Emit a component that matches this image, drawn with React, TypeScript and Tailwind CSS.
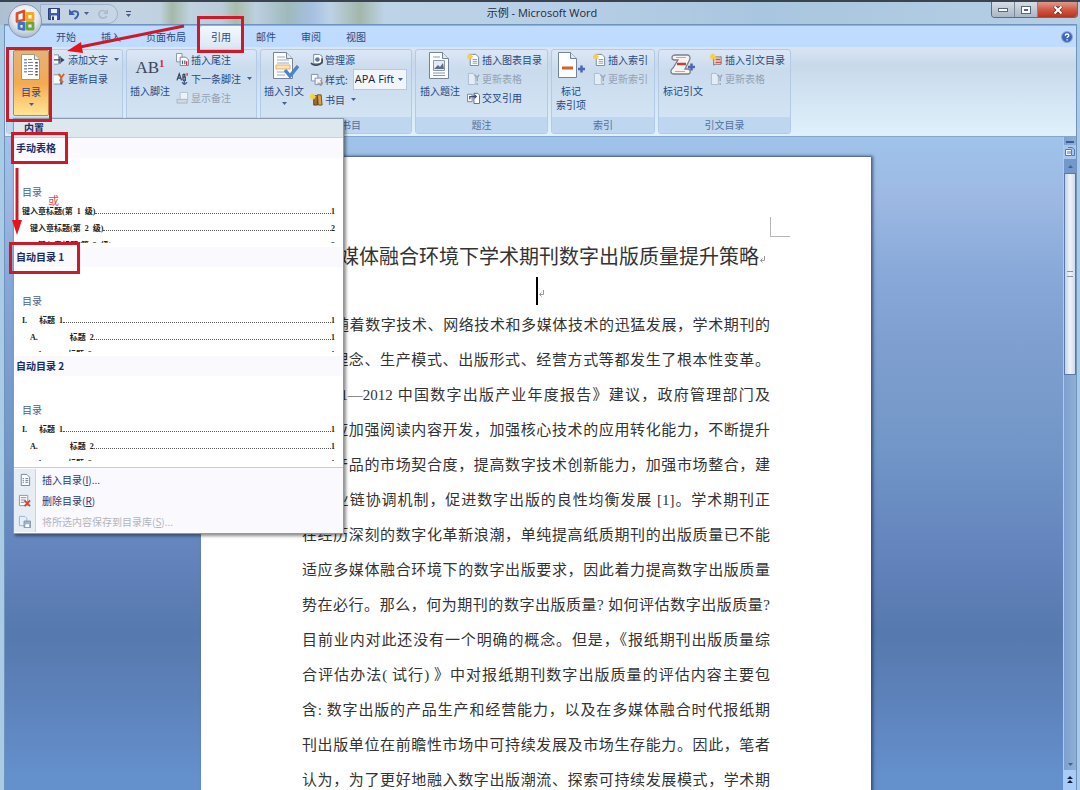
import { ReactNode } from "react";

const docLines = [
  "办刊理念、生产模式、出版形式、经营方式等都发生了根本性变革。",
  "《2011—2012 中国数字出版产业年度报告》建议，政府管理部门及",
  "企业应加强阅读内容开发，加强核心技术的应用转化能力，不断提升",
  "数字产品的市场契合度，提高数字技术创新能力，加强市场整合，建",
  "立产业链协调机制，促进数字出版的良性均衡发展 [1]。学术期刊正",
  "在经历深刻的数字化革新浪潮，单纯提高纸质期刊的出版质量已不能",
  "适应多媒体融合环境下的数字出版要求，因此着力提高数字出版质量",
  "势在必行。那么，何为期刊的数字出版质量? 如何评估数字出版质量?",
  "目前业内对此还没有一个明确的概念。但是，《报纸期刊出版质量综",
  "合评估办法( 试行) 》中对报纸期刊数字出版质量的评估内容主要包",
  "含: 数字出版的产品生产和经营能力，以及在多媒体融合时代报纸期",
  "刊出版单位在前瞻性市场中可持续发展及市场生存能力。因此，笔者",
  "认为，为了更好地融入数字出版潮流、探索可持续发展模式，学术期",
];

const tabs = ["开始", "插入", "页面布局", "引用", "邮件", "审阅", "视图"];

const Caret = ({ className = "" }: { className?: string }) => (
  <svg viewBox="0 0 5 3" className={`h-[3px] w-[5px] shrink-0 ${className}`}>
    <path d="M0 0h5L2.5 3z" fill="#46618f" />
  </svg>
);

const ParaMark = () => (
  <svg viewBox="0 0 6 7" className="inline-block h-[7px] w-[6px]">
    <path d="M5.500 0v4.500H1.500M3.500 2.500l-2 2 2 2" fill="none" stroke="#9a9a9a" />
  </svg>
);

/* ---------- small icons ---------- */

type IconKind =
  | "add"
  | "update"
  | "updateOff"
  | "endnote"
  | "nextNote"
  | "showNote"
  | "sources"
  | "style"
  | "biblio"
  | "newDoc"
  | "cross"
  | "authority"
  | "page"
  | "remove"
  | "save";

const Sheet = ({ off = false }: { off?: boolean }) => (
  <path
    d="M3.5 1.5h6l3 3v9h-9z"
    fill={off ? "#e3eaf2" : "#fbfdff"}
    stroke={off ? "#a9b8c9" : "#74839b"}
  />
);

const Star = () => (
  <path d="M3 0l1 2 2-1-1 2 2 1-2 1 1 2-2-1-1 2-1-2-2 1 1-2-2-1 2-1-1-2 2 1z" fill="#f3cf4e" />
);

const iconArt: Record<IconKind, ReactNode> = {
  add: (
    <>
      <path d="M1 2h5v10H1" fill="#f5f8fc" stroke="#8190a8" />
      <path d="M1 7.500h7M7.500 3.500v8" stroke="#3a4558" strokeWidth="1.400" />
      <path d="M8.500 4.500l4 3-4 3z" fill="#3a4558" />
    </>
  ),
  update: (
    <>
      <path d="M1 3h7v10H1" fill="#f5f8fc" stroke="#8190a8" />
      <path d="M6 2l3 4 3-4M9 6v3M7 8l4 3" fill="none" stroke="#d9622c" strokeWidth="2" />
      <path d="M9 11v2.5" stroke="#4a566b" strokeWidth="2" />
    </>
  ),
  updateOff: (
    <>
      <path d="M1.500 1.500h5l2.500 2.500v9.500h-7.500z" fill="#e4ecf5" stroke="#aabacd" />
      <path d="M8 3l3 3 2-3M11 6v4M11 12v2" fill="none" stroke="#9aa9bb" strokeWidth="1.600" />
    </>
  ),
  endnote: (
    <>
      <path d="M.5 .5h6v9h-6z" fill="#f8fafd" stroke="#8190a8" />
      <path d="M4.500 4.500h6l3 3v6h-9z" fill="#fff" stroke="#74839b" />
      <path d="M7 12V8M9.500 12V8" stroke="#4b5a77" strokeWidth="1.300" />
      <path d="M11.500 9v4" stroke="#cf3a34" strokeWidth="1.500" />
    </>
  ),
  nextNote: (
    <>
      <path d="M1 9l2.500-7L6 9M2 6.500h3M7.500 2.500V9M7.500 2.500h2v3h-2 2.500v3.500H7.500" fill="none" stroke="#333f55" strokeWidth="1.300" />
      <path d="M12 1v3" stroke="#cf3a34" strokeWidth="1.400" />
      <path d="M9 8v5M6.500 11L9 13.500l3-2.500" fill="none" stroke="#47618f" strokeWidth="1.500" />
    </>
  ),
  showNote: (
    <>
      <path d="M4.500 1.500h8v8h-8z" fill="#eef2f7" stroke="#b3c0cf" />
      <path d="M1 9h11v4H1z" fill="#cfd8e3" stroke="#a7b4c4" />
    </>
  ),
  sources: (
    <>
      <path d="M4 1.500h6l3 2v8h-9z" fill="#fff" stroke="#74839b" />
      <path d="M1 11c3 3 9 3 12-1V6" fill="none" stroke="#3e4b63" strokeWidth="1.800" />
      <circle cx="8" cy="7" r="2.500" fill="#5e79a8" />
    </>
  ),
  style: (
    <>
      <path d="M1.500 1.500h7v7h-7z" fill="#f8fafd" stroke="#8190a8" />
      <path d="M5.500 5.500h7v7h-7z" fill="#eef2f9" stroke="#8190a8" />
      <path d="M8 11h5M11 8l3 3-3 3" fill="none" stroke="#b98a8a" strokeWidth="1.200" />
    </>
  ),
  biblio: (
    <>
      <path d="M4 3h4v10H4z" fill="#9a6b35" stroke="#5d4225" />
      <path d="M8 2h4l1 11H9z" fill="#e0a33c" stroke="#6a4b22" />
      <Star />
    </>
  ),
  newDoc: (
    <>
      <Sheet />
      <path d="M6 7h5M6 9h5M6 11h5" stroke="#8b9ab3" />
      <Star />
    </>
  ),
  cross: (
    <>
      <path d="M.5 3.500h5v8h-5z" fill="#f8fafd" stroke="#74839b" />
      <path d="M7.500 2.500h4l2 2v9h-6z" fill="#fff" stroke="#59687f" />
      <path d="M3 9V6h6M8 4l2 2-2 2" fill="none" stroke="#3f4e68" strokeWidth="1.300" />
    </>
  ),
  authority: (
    <>
      <path d="M4 5c3-2 5 0 8-1v8c-3 1-5-1-8 1z" fill="#f0d7cb" stroke="#7d6c77" />
      <path d="M6 7h5M6 10h6" stroke="#c0583f" strokeWidth="1.400" />
      <Star />
    </>
  ),
  page: (
    <>
      <Sheet />
      <path d="M5 6h1.500M5 8h1.500M5 10h1.500M8 6h3M8 8h3M8 10h3" stroke="#6b7990" />
    </>
  ),
  remove: (
    <>
      <path d="M1.500 1.500h9v11h-9z" fill="#fbfdff" stroke="#8a93a5" />
      <path d="M3 4h6M3 6.500h5M3 9h4" stroke="#7d8798" />
      <path d="M7 7l6 6M13 7l-6 6" stroke="#d5493b" strokeWidth="2" />
    </>
  ),
  save: (
    <>
      <path d="M1.500 1.500h6l2 2v8h-8z" fill="#e6eff7" stroke="#9db1c9" />
      <path d="M6.500 6.500h7v7h-7z" fill="#9fb4cd" stroke="#7f95b2" />
      <path d="M8 10h4v3H8z" fill="#fff" />
    </>
  ),
};

const SmallIcon = ({ kind }: { kind: IconKind }) => (
  <svg viewBox="0 0 14 14" className="h-[13px] w-[13px] shrink-0">
    {iconArt[kind]}
  </svg>
);

/* ---------- large icons ---------- */

const LargeSheet = () => (
  <>
    <path d="M4.500 2.500h13l6 6v20h-19z" fill="#fdfeff" stroke="#76849b" />
    <path d="M17.500 2.500v6h6" fill="#dfe7f1" stroke="#76849b" />
  </>
);

const TocIcon = () => (
  <svg viewBox="0 0 30 30" className="h-[30px] w-[30px]">
    <path d="M5.500 3.500h13l5 5v20h-18z" fill="#fff" stroke="#a89878" />
    <path d="M18.500 3.500v5h5" fill="#e9edf3" stroke="#8a8f99" />
    <path d="M9.500 8v15" stroke="#8b96a8" strokeWidth="3" strokeDasharray="1.500 1.500" />
    <path d="M12 8.500h4M12 11.500h5M12 14.500h5M12 17.500h5M12 20.500h5M12 23.500h5" stroke="#7c8694" />
    <path d="M20.500 11v14" stroke="#4b5462" strokeWidth="2.500" strokeDasharray="1.500 1.500" />
  </svg>
);

const CitationIcon = () => (
  <svg viewBox="0 0 30 30" className="h-[30px] w-[30px]">
    <LargeSheet />
    <path d="M8 7h8M8 10h12M8 13h12M8 22h10M8 25h8" stroke="#9aa9bf" />
    <path d="M7 15h14v4H7z" fill="#fbe3bd" stroke="#e8b168" />
    <path d="M16 20l5 6 8-10" fill="none" stroke="#4c84cc" strokeWidth="3.500" />
  </svg>
);

const CaptionIcon = () => (
  <svg viewBox="0 0 30 30" className="h-[30px] w-[30px]">
    <LargeSheet />
    <path d="M8 7h7M8 23h12M8 25.500h12" stroke="#8a99b0" />
    <path d="M8.500 10.500h11v10h-11z" fill="#e4ebf4" stroke="#8a99b0" />
    <path d="M9 19l4-4 2 2 3-4 1 6z" fill="#5d6e88" />
  </svg>
);

const EntryIcon = () => (
  <svg viewBox="0 0 30 30" className="h-[30px] w-[30px]">
    <path d="M2.500 2.500h12l6 6v19h-18z" fill="#fdfeff" stroke="#76849b" />
    <path d="M14.500 2.500v6h6" fill="#dfe7f1" stroke="#76849b" />
    <path d="M6 18h11" stroke="#d4612c" strokeWidth="3" />
    <path d="M22 19h7M25.500 15.500v7" stroke="#4a67b0" strokeWidth="2.500" />
  </svg>
);

const MarkIcon = () => (
  <svg viewBox="0 0 30 30" className="h-[30px] w-[30px]">
    <path
      d="M4 8c0-3 2-3 4-3h11c3 0 4 3 2 6l-4 8h3c3 0 3 5 0 5H6c-4 0-4-4-1-6l5-8H7c-2 0-3-1-3-2z"
      fill="#f6f3f3"
      stroke="#7f7f8b"
      strokeWidth="1.300"
    />
    <path d="M8 7.500h10M7 21.500h10" stroke="#a9adb8" />
    <path d="M9 14h9" stroke="#cf3d31" strokeWidth="2.500" />
    <path d="M20 17h7M23.500 13.500v7" stroke="#4a67b0" strokeWidth="2.500" />
  </svg>
);

const FootnoteIcon = () => (
  <span className="flex h-[30px] items-start pt-2 font-['Liberation_Serif',serif] text-[17px] leading-5 text-[#3c4658]">
    AB<span className="text-[11px] leading-[10px] font-bold text-[#cb3434]">1</span>
  </span>
);

const OfficeLogo = () => (
  <svg viewBox="0 0 36 36" className="absolute top-[3px] left-[7px] z-10 h-9 w-9">
    <defs>
      <radialGradient id="orb" cx="50%" cy="35%" r="65%">
        <stop offset="0" stopColor="#ffffff" />
        <stop offset=".6" stopColor="#e3e9f0" />
        <stop offset="1" stopColor="#a9b7c9" />
      </radialGradient>
    </defs>
    <circle cx="18" cy="18" r="16.500" fill="url(#orb)" stroke="#8499b5" />
    <g fill="none" strokeWidth="2.800" strokeLinejoin="round">
      <path d="M10 10.500l7-2.500v9l-7 1.500z" stroke="#d8532a" />
      <path d="M20 10.500h6v6.500h-6z" stroke="#f0a928" />
      <path d="M12 20.500h5v6l-5-1z" stroke="#3c74c2" />
      <path d="M20 20h6v6h-6z" stroke="#6ca53c" />
    </g>
  </svg>
);

/* ---------- ribbon pieces ---------- */

const Group = ({
  label,
  className,
  children,
}: {
  label: string;
  className: string;
  children: ReactNode;
}) => (
  <section
    className={`flex shrink-0 flex-col overflow-hidden rounded-[3px] border border-[#b3cae6] bg-gradient-to-b from-[#dce7f5] via-[#c9dbed] via-25% to-[#d6e6f6] ${className}`}
  >
    <div className="flex flex-1 items-start">{children}</div>
    <h2 className="h-4 bg-[#bed6f0] text-center leading-4 text-[#54709d]">{label}</h2>
  </section>
);

const Big = ({
  icon,
  lines,
  caret = false,
  className,
}: {
  icon: ReactNode;
  lines: string[];
  caret?: boolean;
  className: string;
}) => (
  <button className={`flex flex-col items-center ${className}`}>
    {icon}
    <span className="pt-1 leading-[14px] whitespace-nowrap">
      {lines.map((l) => (
        <span key={l} className="block">
          {l}
        </span>
      ))}
    </span>
    {caret && <Caret className="mt-1" />}
  </button>
);

const Small = ({
  icon,
  text,
  caret = false,
  disabled = false,
}: {
  icon: IconKind;
  text: string;
  caret?: boolean;
  disabled?: boolean;
}) => (
  <button
    disabled={disabled}
    className="flex h-[19px] items-center gap-[2px] whitespace-nowrap disabled:text-[#94a2b4]"
  >
    <SmallIcon kind={icon} />
    {text}
    {caret && <Caret className="ml-1" />}
  </button>
);

const Ribbon = () => (
  <div className="flex h-[90px] gap-[3px] border-b border-[#86a5cc] bg-gradient-to-b from-[#dbe5f2] via-[#c8d9ea] via-20% to-[#e0f1fd] px-px pt-[2px] pb-[2px] text-[10px] text-[#284881]">
    <Group label="目录" className="w-[117px]">
      <Big
        icon={<TocIcon />}
        lines={["目录"]}
        caret
        className="ml-1.5 h-[66px] w-9 rounded-[2px] border border-[#b88a4a] bg-gradient-to-b from-[#e3b27b] via-[#f4a94d] via-50% to-[#ffe596]"
      />
      <div className="ml-1">
        <Small icon="add" text="添加文字" caret />
        <Small icon="update" text="更新目录" />
      </div>
    </Group>
    <Group label="脚注" className="w-[131px]">
      <Big icon={<FootnoteIcon />} lines={["插入脚注"]} className="w-[46px]" />
      <div className="ml-[3px]">
        <Small icon="endnote" text="插入尾注" />
        <Small icon="nextNote" text="下一条脚注" caret />
        <Small icon="showNote" text="显示备注" disabled />
      </div>
    </Group>
    <Group label="引文与书目" className="w-[152px]">
      <Big icon={<CitationIcon />} lines={["插入引文"]} caret className="w-[46px]" />
      <div className="ml-[3px]">
        <Small icon="sources" text="管理源" />
        <div className="flex h-[21px] items-center gap-[2px]">
          <SmallIcon kind="style" />
          <label htmlFor="cite-style" className="whitespace-nowrap">
            样式:
          </label>
          <span className="relative ml-[3px] flex items-center">
            <select
              id="cite-style"
              className="h-[21px] w-[54px] appearance-none border border-[#b4c8e0] bg-[#f1f6fc] pr-3 pl-px font-['Open_Sans',sans-serif] text-[11px] text-[#1d2433]"
            >
              <option>APA Fifth</option>
            </select>
            <Caret className="pointer-events-none absolute right-1" />
          </span>
        </div>
        <Small icon="biblio" text="书目" caret />
      </div>
    </Group>
    <Group label="题注" className="w-[133px]">
      <Big icon={<CaptionIcon />} lines={["插入题注"]} className="w-12" />
      <div className="ml-[3px]">
        <Small icon="newDoc" text="插入图表目录" />
        <Small icon="updateOff" text="更新表格" disabled />
        <Small icon="cross" text="交叉引用" />
      </div>
    </Group>
    <Group label="索引" className="w-[104px]">
      <Big icon={<EntryIcon />} lines={["标记", "索引项"]} className="w-[38px]" />
      <div className="ml-[3px]">
        <Small icon="newDoc" text="插入索引" />
        <Small icon="updateOff" text="更新索引" disabled />
      </div>
    </Group>
    <Group label="引文目录" className="w-[133px]">
      <Big icon={<MarkIcon />} lines={["标记引文"]} className="w-12" />
      <div className="ml-[3px]">
        <Small icon="authority" text="插入引文目录" />
        <Small icon="updateOff" text="更新表格" disabled />
      </div>
    </Group>
  </div>
);

const TitleBar = () => (
  <header className="grid h-[25px] grid-cols-[1fr_auto_1fr] items-center border-t-2 border-[#3c4350] bg-[linear-gradient(90deg,#aebfd0_0,#c3d3e2_120px,#c0d2df_160px,#a5b8a8_172px,#bfd2e0_190px,#b9ccd8_222px,#a8bca9_236px,#bcd0e0_256px,#9fb9bb_288px,#a6c0e2_312px,#bdd2e6_330px,#a3b7a9_360px,#bdd3e6_384px,#b7cfe6_560px,#a9c6e0_760px,#b5cfe4_100%)]">
    <div className="ml-10 flex h-5 w-[96px] items-center gap-2">
      <div className="flex h-5 w-[78px] items-center justify-end gap-2 rounded-r-full border border-[#9db2c9] bg-[#c9d8e6]/60 pr-2">
        <button aria-label="保存">
          <svg viewBox="0 0 12 12" className="h-3 w-3">
            <path d="M.5 .5h11v11H.5z" fill="#4059a8" stroke="#2c3e7d" />
            <path d="M3 1h6v4H3zM3 7.500h6V12H3z" fill="#e9eef8" />
            <path d="M4 8.500h2V12H4z" fill="#2c3e7d" />
          </svg>
        </button>
        <button aria-label="撤消" className="flex items-center gap-1">
          <svg viewBox="0 0 12 12" className="h-3 w-3">
            <path d="M3 5c3-3 8-2 7 2-.5 2-2 3-3.500 4" fill="none" stroke="#3f5fae" strokeWidth="2" />
            <path d="M1 1v6h6z" fill="#3f5fae" />
          </svg>
          <Caret />
        </button>
        <button aria-label="恢复" disabled>
          <svg viewBox="0 0 12 12" className="h-3 w-3">
            <path d="M9 4C6 1 1 3 2 7s6 4 8 1" fill="none" stroke="#a9bccf" strokeWidth="1.600" />
            <path d="M11 1v5H6z" fill="#a9bccf" />
          </svg>
        </button>
      </div>
      <button aria-label="自定义快速访问工具栏" className="flex shrink-0 flex-col items-center gap-[2px]">
        <span className="h-px w-[5px] bg-[#3d4d68]" />
        <Caret />
      </button>
    </div>
    <h1 className="pl-1 font-['Open_Sans','Noto_Sans_CJK_SC',sans-serif] text-[11px] text-[#1e2a3a]">
      示例 - Microsoft Word
    </h1>
    <div className="mr-[2px] flex h-4 self-start justify-self-end overflow-hidden rounded-b-[4px] border border-t-0 border-[#5f6c7f]">
      <button aria-label="最小化" className="flex w-[23px] items-center justify-center border-r border-[#7b8999] bg-gradient-to-b from-[#d6dde6] to-[#a9b6c6]">
        <span className="h-1 w-[10px] border border-[#59667a] bg-white" />
      </button>
      <button aria-label="还原" className="flex w-[23px] items-center justify-center border-r border-[#7b8999] bg-gradient-to-b from-[#d6dde6] to-[#a9b6c6]">
        <span className="flex h-2 w-[10px] items-center justify-center border border-[#59667a] bg-white">
          <span className="h-[2px] w-1 bg-[#59667a]" />
        </span>
      </button>
      <button aria-label="关闭" className="flex w-[39px] items-center justify-center bg-gradient-to-b from-[#e0998c] via-[#cf5a46] to-[#b9331e]">
        <svg viewBox="0 0 10 8" className="h-2 w-[10px]">
          <path d="M1.500 0l7 8M8.500 0l-7 8" stroke="#5b2a22" strokeWidth="3.600" />
          <path d="M1.500 .5l7 7M8.500 .5l-7 7" stroke="#fff" strokeWidth="2.200" />
        </svg>
      </button>
    </div>
  </header>
);

const TabRow = () => (
  <nav className="flex h-[22px] items-stretch gap-px border-t border-[#8fb0d8] bg-[#bfdbff] pl-[39px] text-[10px] text-[#2b4a82]">
    {tabs.map((t) => (
      <button
        key={t}
        className={
          t === "引用"
            ? "rounded-t-[3px] border border-y-0 border-[#9bb8dd] bg-gradient-to-b from-[#f3f8fe] to-[#dde8f4] px-[11px]"
            : "px-3"
        }
      >
        {t}
      </button>
    ))}
    <button aria-label="帮助" className="mr-[3px] ml-auto">
      <svg viewBox="0 0 12 12" className="h-3 w-3">
        <circle cx="6" cy="6" r="5.500" fill="#3c67b8" stroke="#8fabd8" />
        <path d="M4.300 4.700c0-2.300 3.500-2.200 3.500-.2 0 1.300-1.700 1.200-1.700 2.500M6.100 8.300v1.300" fill="none" stroke="#fff" strokeWidth="1.400" />
      </svg>
    </button>
  </nav>
);

/* ---------- gallery ---------- */

const TocLine = ({
  num,
  text,
  page,
  className = "",
  textClass = "",
}: {
  num?: string;
  text: string;
  page: string;
  className?: string;
  textClass?: string;
}) => (
  <div className={`flex h-[17px] items-center whitespace-pre ${className}`}>
    {num && <span>{num}</span>}
    <span className={textClass}>{text}</span>
    <span className="mt-1 flex-1 border-b border-dotted border-[#555]" />
    <span>{page}</span>
  </div>
);

const GalleryItem = ({ title, children }: { title: string; children: ReactNode }) => (
  <button className="flex h-[109px] w-full flex-col text-left">
    <span className="block h-5 w-full bg-[#f9f9fe] pl-[2px] text-[10px] leading-5 font-bold text-[#1c2c66]">
      {title}
    </span>
    <div className="h-[85px] w-full overflow-hidden px-2 pt-[25px] font-['Liberation_Serif','Noto_Sans_CJK_SC',serif] text-[8px] leading-[10px] font-bold text-[#222]">
      <p className="h-5 text-[10px] leading-5 font-normal text-[#47628f]">目录</p>
      {children}
    </div>
  </button>
);

const AutoToc = () => (
  <>
    <TocLine num="I." text="标题  1" page="1" textClass="ml-3" />
    <TocLine num="A." text="标题  2" page="1" className="pl-2" textClass="ml-8" />
    <TocLine num="1." text="标题  3" page="1" className="pl-4" textClass="ml-6" />
  </>
);

const MenuRow = ({
  icon,
  text,
  hotkey,
  tail = "",
  disabled = false,
}: {
  icon: IconKind;
  text: string;
  hotkey: string;
  tail?: string;
  disabled?: boolean;
}) => (
  <button
    disabled={disabled}
    className="flex h-[21px] w-full items-center text-[#27397a] disabled:text-[#b2b5bc]"
  >
    <span className="flex h-full w-[22px] items-center justify-center border-r border-[#c9d3e0] bg-[#e7edf5]">
      <SmallIcon kind={icon} />
    </span>
    <span className="pl-1.5">
      {text}(<u>{hotkey}</u>){tail}
    </span>
  </button>
);

const Gallery = () => (
  <div className="absolute top-[118px] left-[13px] z-20 w-[331px] border border-[#8d9aad] bg-white text-[10px] shadow-[2px_2px_3px_rgba(0,0,0,0.45)]">
    <h3 className="h-[19px] border-b border-[#c6d2de] bg-[#dde7ee] pl-[10px] leading-[18px] font-bold text-[#1c2c66]">
      内置
    </h3>
    <GalleryItem title="手动表格">
      <TocLine text="键入章标题(第  1  级)" page="1" />
      <TocLine text="键入章标题(第  2  级)" page="2" className="pl-2" />
      <TocLine text="键入章标题(第  3  级)" page="3" className="pl-4" />
    </GalleryItem>
    <GalleryItem title="自动目录 1">
      <AutoToc />
    </GalleryItem>
    <GalleryItem title="自动目录 2">
      <AutoToc />
    </GalleryItem>
    <div className="mt-[2px] border-t border-[#c3ccd8] bg-[#f9f9fe] py-px">
      <MenuRow icon="page" text="插入目录" hotkey="I" tail="..." />
      <MenuRow icon="remove" text="删除目录" hotkey="R" />
      <MenuRow icon="save" text="将所选内容保存到目录库" hotkey="S" tail="..." disabled />
    </div>
  </div>
);

/* ---------- document ---------- */

const Page = () => (
  <article className="mx-auto mt-[19px] flex w-[670px] shrink-0 flex-col border-t border-[#5a6f92] bg-white px-[101px] font-['Liberation_Serif','Noto_Sans_CJK_SC',serif] text-[#333] shadow-[2px_0_3px_rgba(30,50,90,0.7)]">
    <span className="mt-[60px] -mr-5 h-5 w-5 self-end border-b border-l border-[#b5b5b5]" />
    <h2 className="pt-[2px] pl-3 text-center text-[20px] leading-[36px] whitespace-nowrap">
      多媒体融合环境下学术期刊数字出版质量提升策略
      <ParaMark />
    </h2>
    <div className="flex h-[33px] items-start justify-center pt-[2px] pl-2">
      <span className="h-7 w-[2px] bg-black" />
      <span className="self-center">
        <ParaMark />
      </span>
    </div>
    <p className="text-[15px] leading-[35px] whitespace-nowrap">
      <span className="block pl-8 [text-align-last:justify]">
        随着数字技术、网络技术和多媒体技术的迅猛发展，学术期刊的
      </span>
      {docLines.map((line) => (
        <span key={line} className="block [text-align-last:justify]">
          {line}
        </span>
      ))}
    </p>
  </article>
);

const ScrollBar = () => (
  <div className="flex w-[13px] shrink-0 flex-col items-center border-l border-[#a9cdf2] bg-gradient-to-r from-[#7f9fd0] to-[#8fb0d4]">
    <span className="mt-1 h-[2px] w-2 bg-[#3b5c94]" />
    <button aria-label="标尺" className="mt-[2px] flex h-[14px] w-full items-center justify-center bg-[#a9c6ec]">
      <svg viewBox="0 0 10 10" className="h-[10px] w-[10px]">
        <path d="M.5 2.500h6v6h-6z" fill="#eef4fc" stroke="#5d78a8" />
        <path d="M3 .5h4l2.500 2v6H7M3 4v3M5 4v3" fill="none" stroke="#5d78a8" />
      </svg>
    </button>
    <button aria-label="向上" className="flex h-[14px] w-full items-center justify-center bg-[#7299c9]">
      <Caret className="rotate-180" />
    </button>
    <div className="flex h-[202px] w-full items-center justify-center border border-[#5a77a8] bg-gradient-to-r from-[#c3d2e6] via-[#eff4fa] to-[#d0dae8]">
      <span className="h-[6px] w-[6px] border-y border-[#8493a9]" />
    </div>
    <button aria-label="向下" className="mt-auto flex h-3 w-full items-center justify-center">
      <Caret />
    </button>
    <button aria-label="前一页" className="flex h-5 w-full items-center justify-center bg-[#a9cbf8]">
      <svg viewBox="0 0 6 8" className="h-2 w-[6px]">
        <path d="M3 0l3 3H0zM3 4l3 3H0z" fill="#101d3d" />
      </svg>
    </button>
  </div>
);

/* Red hand-drawn guides over the window */
const Marks = () => (
  <>
    <svg viewBox="0 0 260 290" className="pointer-events-none absolute top-0 left-0 z-30 h-[290px] w-[260px]">
      <g fill="none" stroke="#cd1a2b" strokeWidth="3">
        <path d="M7.500 48.500h43v72h-43z" />
        <path d="M198.500 17.500h44v34h-44z" />
        <path d="M12.500 133.500h54v29h-54z" />
        <path d="M10.500 243.500h68v29h-68z" />
        <path d="M184 26L80 47" />
        <path d="M17 168v54" />
      </g>
      <path d="M67 51l14-9 2 11z" fill="#e5141c" />
      <path d="M12 220h10l-5 15z" fill="#e5141c" />
    </svg>
    <span className="absolute top-[192px] left-[48px] z-30 font-['Noto_Sans_CJK_SC',sans-serif] text-[11px] leading-4 text-[#dc4a4a]">
      或
    </span>
  </>
);

const App = () => (
  <div className="relative flex h-screen flex-col overflow-hidden bg-[#a9cbe6] font-['Noto_Sans_CJK_SC',sans-serif]">
    <TitleBar />
    <OfficeLogo />
    <div className="mr-1 ml-[5px] flex min-h-0 flex-1 flex-col shadow-[0_0_0_1px_#6f93bf]">
      <TabRow />
      <Ribbon />
      <div className="flex min-h-0 flex-1">
        <main className="flex min-w-0 flex-1 flex-col overflow-hidden bg-[linear-gradient(180deg,#9fc3ea_0,#9db9e3_60px,#87a8d8_140px,#7f9fd0_205px,#7398c8_300px,#6384bd_415px,#5679ae_495px,#5c80b8_550px,#6490cc_640px)] pl-1">
          <Page />
        </main>
        <ScrollBar />
      </div>
    </div>
    <Gallery />
    <Marks />
  </div>
);

export default App;
